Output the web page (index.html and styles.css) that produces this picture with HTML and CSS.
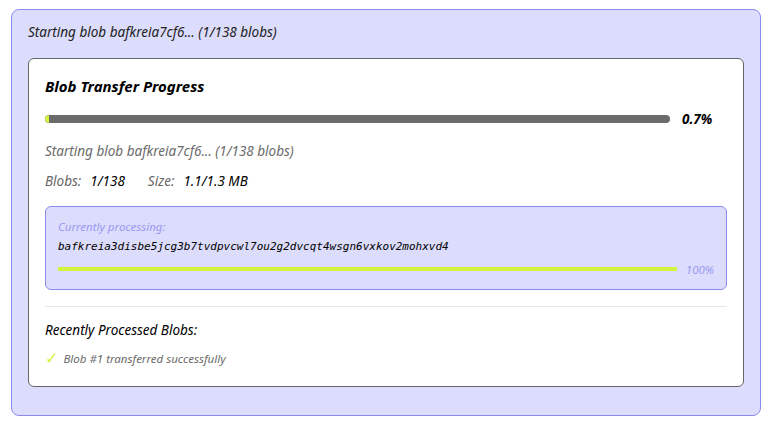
FILE: index.html
```html
<!DOCTYPE html>
<html>
<head>
<meta charset="utf-8">
<link rel="stylesheet" href="styles.css">
</head>
<body>
<div class="outer">
  <div class="top-status">Starting blob bafkreia7cf6... (1/138 blobs)</div>
  <div class="card">
    <h3 class="title">Blob Transfer Progress</h3>
    <div class="progress-row">
      <div class="bar"><div class="bar-fill" style="width:0.7%"></div></div>
      <div class="pct">0.7%</div>
    </div>
    <div class="status">Starting blob bafkreia7cf6... (1/138 blobs)</div>
    <div class="stats">
      <span class="stat"><span class="label">Blobs:</span><span class="value">1/138</span></span>
      <span class="stat"><span class="label">Size:</span><span class="value">1.1/1.3 MB</span></span>
    </div>
    <div class="processing">
      <div class="proc-label">Currently processing:</div>
      <div class="hash">bafkreia3disbe5jcg3b7tvdpvcwl7ou2g2dvcqt4wsgn6vxkov2mohxvd4</div>
      <div class="proc-row">
        <div class="proc-bar"><div class="proc-fill" style="width:100%"></div></div>
        <div class="proc-pct">100%</div>
      </div>
    </div>
    <div class="divider"></div>
    <div class="recent-title">Recently Processed Blobs:</div>
    <div class="recent-item"><span class="check">✓</span><span>Blob #1 transferred successfully</span></div>
  </div>
</div>
</body>
</html>
```
FILE: styles.css
```css
html, body {
  margin: 0;
  padding: 0;
  background: #ffffff;
}
body {
  padding: 9px 16px 0 11px;
  font-family: "Noto Sans", "Open Sans", sans-serif;
  font-style: italic;
  color: #111;
}
.outer {
  background: #dcdcfc;
  border: 1px solid #8b8bef;
  border-radius: 8px;
  padding: 12px 16px 28px 16px;
}
.top-status {
  font-size: 13.5px;
  line-height: 20px;
  color: #222;
  margin-bottom: 16px;
}
.card {
  background: #fff;
  border: 1px solid #666;
  border-radius: 6px;
  padding: 16px 16px 19px 16px;
}
.title {
  margin: 0 0 14px 0;
  font-size: 15px;
  line-height: 22px;
  font-weight: 700;
  color: #000;
}
.progress-row {
  display: flex;
  align-items: center;
  gap: 12px;
  height: 16px;
}
.bar {
  flex: 1;
  height: 8px;
  background: #6b6b6b;
  border-radius: 4px;
  overflow: hidden;
}
.bar-fill {
  height: 100%;
  background: #d3f33e;
  border-radius: 4px 0 0 4px;
}
.pct {
  width: 45px;
  font-size: 13.5px;
  font-weight: 700;
  color: #000;
}
.status {
  margin-top: 14px;
  font-size: 13.5px;
  line-height: 20px;
  color: #6b6b6b;
}
.stats {
  margin-top: 10px;
  display: flex;
  gap: 23px;
  font-size: 13.5px;
  line-height: 20px;
}
.stat {
  display: flex;
  gap: 9px;
}
.label {
  color: #666;
}
.value {
  color: #000;
}
.processing {
  margin-top: 15px;
  background: #dcdcfc;
  border: 1px solid #8b8bef;
  border-radius: 6px;
  padding: 12px 12px 12px 12px;
}
.proc-label {
  font-size: 11.5px;
  line-height: 16px;
  color: #9a9af2;
}
.hash {
  margin-top: 4px;
  font-family: "DejaVu Sans Mono", monospace;
  font-style: italic;
  font-size: 11px;
  line-height: 16px;
  color: #000;
}
.proc-row {
  margin-top: 6px;
  display: flex;
  align-items: center;
  gap: 9px;
  height: 16px;
}
.proc-bar {
  flex: 1;
  height: 4px;
  background: #6b6b6b;
}
.proc-fill {
  height: 100%;
  background: #d3f33e;
}
.proc-pct {
  font-size: 11.5px;
  color: #9a9af2;
}
.divider {
  margin-top: 16px;
  height: 1px;
  background: #e3e6ee;
}
.recent-title {
  margin-top: 13px;
  font-size: 13.5px;
  line-height: 20px;
  color: #000;
}
.recent-item {
  margin-top: 11px;
  display: flex;
  align-items: center;
  gap: 5px;
  font-size: 11.5px;
  line-height: 16px;
  color: #6b6b6b;
}
.check {
  color: #d3f33e;
  font-size: 16px;
  font-style: normal;
  font-family: "DejaVu Sans", sans-serif;
}
```
